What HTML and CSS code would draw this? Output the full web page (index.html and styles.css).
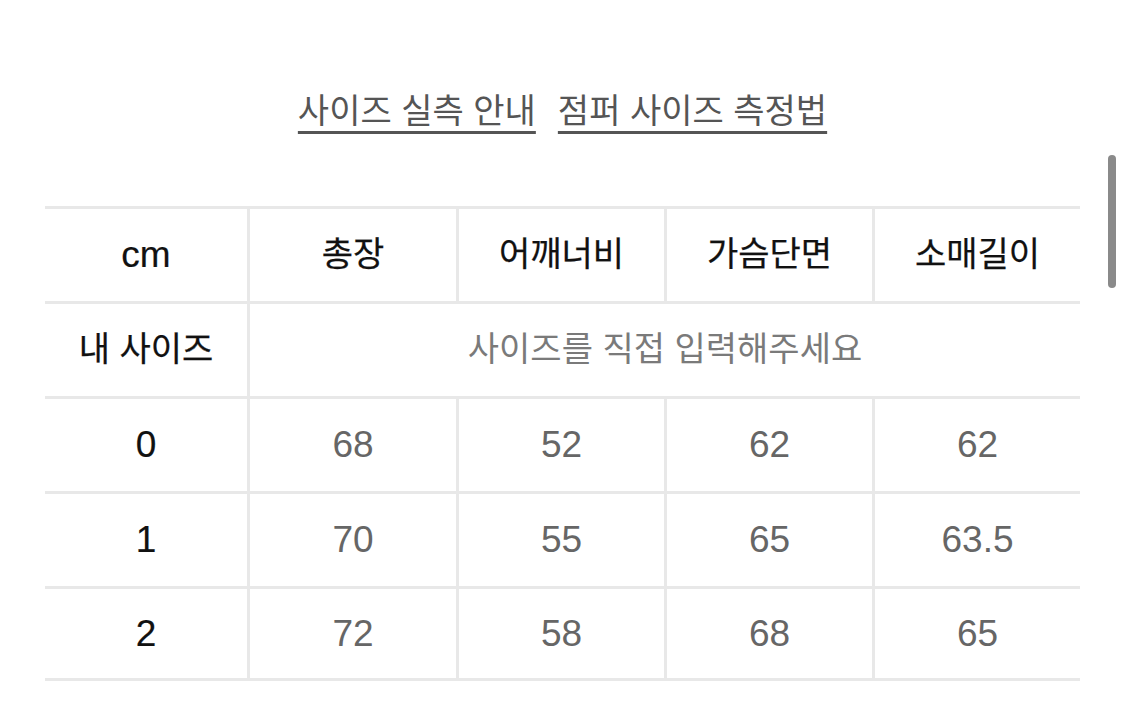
FILE: index.html
```html
<!DOCTYPE html>
<html lang="ko">
<head>
<meta charset="utf-8">
<link rel="stylesheet" href="styles.css">
</head>
<body>
<div class="page">
  <nav class="links">
    <a class="link" href="#">사이즈 실측 안내</a>
    <a class="link" href="#">점퍼 사이즈 측정법</a>
  </nav>
  <div class="size-table">
    <div class="cell head num first">cm</div>
    <div class="cell head">총장</div>
    <div class="cell head">어깨너비</div>
    <div class="cell head">가슴단면</div>
    <div class="cell head">소매길이</div>

    <div class="cell head first">내 사이즈</div>
    <div class="cell placeholder">사이즈를 직접 입력해주세요</div>

    <div class="cell head num first">0</div>
    <div class="cell val num">68</div>
    <div class="cell val num">52</div>
    <div class="cell val num">62</div>
    <div class="cell val num">62</div>

    <div class="cell head num first">1</div>
    <div class="cell val num">70</div>
    <div class="cell val num">55</div>
    <div class="cell val num">65</div>
    <div class="cell val num">63.5</div>

    <div class="cell head num first last">2</div>
    <div class="cell val num last">72</div>
    <div class="cell val num last">58</div>
    <div class="cell val num last">68</div>
    <div class="cell val num last">65</div>
  </div>
  <div class="scrollbar"></div>
</div>
</body>
</html>
```

FILE: styles.css
```css
html, body {
  margin: 0;
  padding: 0;
  background: #ffffff;
}

body {
  font-family: "Liberation Sans", "Noto Sans CJK KR", sans-serif;
  color: #111111;
}

.page {
  position: relative;
  width: 1125px;
  height: 726px;
  overflow: hidden;
}

.links {
  display: flex;
  justify-content: center;
  align-items: flex-start;
  gap: 22px;
  padding-top: 89px;
  height: 206px;
  box-sizing: border-box;
}

.link {
  font-family: "Noto Sans CJK KR", sans-serif;
  font-size: 34px;
  line-height: 40px;
  color: #555555;
  text-decoration: underline;
  text-decoration-thickness: 3px;
  text-underline-offset: 8px;
}

.size-table {
  display: grid;
  grid-template-columns: 202px 209px 208px 208px 208px;
  grid-auto-rows: 95px;
  margin-left: 45px;
  width: 1035px;
}

.cell {
  display: flex;
  align-items: center;
  justify-content: center;
  box-sizing: border-box;
  padding-bottom: 8px;
  border-top: 3px solid #e8e8e8;
  border-left: 3px solid #e8e8e8;
  font-family: "Noto Sans CJK KR", sans-serif;
  font-size: 34px;
}

.cell.num {
  padding-bottom: 0;
  font-family: "Liberation Sans", sans-serif;
  font-size: 37px;
}

.cell.first {
  border-left: none;
}

.cell.last {
  border-bottom: 3px solid #e8e8e8;
}

.head {
  color: #111111;
  -webkit-text-stroke: 0.25px #111111;
}

.head.num {
  -webkit-text-stroke: 0.2px #111111;
}

.val {
  color: #666666;
}

.placeholder {
  grid-column: 2 / 6;
  color: #7a7a7a;
}

.scrollbar {
  position: absolute;
  left: 1108px;
  top: 155px;
  width: 8px;
  height: 133px;
  border-radius: 4px;
  background: #8a8a8a;
}
```
